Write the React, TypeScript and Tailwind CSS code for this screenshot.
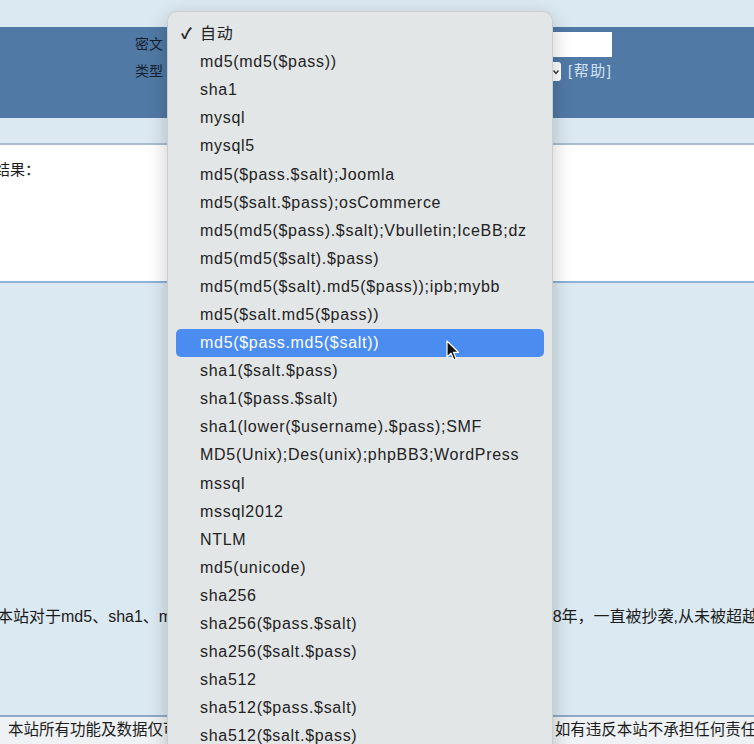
const options = [
  "自动",
  "md5(md5($pass))",
  "sha1",
  "mysql",
  "mysql5",
  "md5($pass.$salt);Joomla",
  "md5($salt.$pass);osCommerce",
  "md5(md5($pass).$salt);Vbulletin;IceBB;dz",
  "md5(md5($salt).$pass)",
  "md5(md5($salt).md5($pass));ipb;mybb",
  "md5($salt.md5($pass))",
  "md5($pass.md5($salt))",
  "sha1($salt.$pass)",
  "sha1($pass.$salt)",
  "sha1(lower($username).$pass);SMF",
  "MD5(Unix);Des(unix);phpBB3;WordPress",
  "mssql",
  "mssql2012",
  "NTLM",
  "md5(unicode)",
  "sha256",
  "sha256($pass.$salt)",
  "sha256($salt.$pass)",
  "sha512",
  "sha512($pass.$salt)",
  "sha512($salt.$pass)",
]

const selected = 0
const hovered = 11

export default function App() {
  return (
    <div className="relative h-[744px] w-[754px] overflow-hidden bg-[#dbe9f2] font-['Liberation_Sans','Noto_Sans_CJK_SC',sans-serif] text-[15px] text-[#1c1c1c]">
      {/* top strip */}
      <div className="h-[27px]" />

      {/* blue form band */}
      <div className="h-[91px] bg-[#5079a5] pt-[5px]">
        <div className="flex h-[25px] items-center">
          <span className="w-[163px] text-right text-[14px] text-[#16212e]">密文</span>
          <div className="ml-[10px] h-[25px] w-[439px] bg-white" />
        </div>
        <div className="mt-[5px] flex h-[19px] items-center">
          <span className="w-[163px] text-right text-[14px] text-[#16212e]">类型</span>
          <div className="ml-[10px] flex h-[19px] w-[388px] items-center justify-end rounded-[3px] bg-white pr-[2px]">
            <svg width="6" height="6" viewBox="0 0 6 6">
              <path d="M0.5 1.5 L3 4.5 L5.5 1.5" fill="none" stroke="#333" strokeWidth="1.4" />
            </svg>
          </div>
          <a className="ml-[7px] text-[15px] tracking-[1.5px] text-[#d3e3f7]">[帮助]</a>
        </div>
      </div>

      <div className="h-[25px]" />

      {/* result panel */}
      <div className="h-[140px] border-t-2 border-b-2 border-t-[#a8bdd0] border-b-[#8fb0da] bg-white pt-[15px]">
        <p className="-ml-[5px] leading-[20px]">结果：</p>
      </div>

      {/* info line */}
      <div className="h-[432px] pt-[324px]">
        <p className="-ml-[3px] whitespace-nowrap text-[16px] leading-[20px]">
          本站对于md5、sha1、mysql、sha256、sha512、ntlm等加密算法破解已研究18年，一直被抄袭,从未被超越
        </p>
      </div>

      {/* footer */}
      <div className="border-t-2 border-[#8ea9c8] bg-[#eef2f4] pt-[3px] text-[15.5px]">
        <p className="ml-[8px] whitespace-nowrap leading-[20px]">
          本站所有功能及数据仅可用于学习研究和合法用途，严禁用于任何违法犯罪行为 如有违反本站不承担任何责任
        </p>
        <p className="ml-[60px] whitespace-nowrap leading-[20px] text-[#2255cc]">
          Copyright © cmd5.com 2006-2024 联系邮箱 123@17304596.com 客服
        </p>
      </div>

      {/* native select menu */}
      <div className="absolute left-[167px] top-[11px] w-[386px] rounded-[10px] border border-black/10 bg-[#e3e6e7] pt-[8px] pb-[8px] shadow-[0_6px_20px_rgba(0,0,0,0.22)]">
        {options.map((o, i) => (
          <div
            key={o}
            className={
              "relative mx-[8px] flex h-[28.1px] items-center rounded-[5px] pl-[24px] text-[16px] tracking-[0.7px] whitespace-nowrap " +
              (i === hovered ? "bg-[#4a8cf0] text-white" : "text-[#222]")
            }
          >
            {i === selected && (
              <span className="absolute left-[5px] text-[15px] font-bold">✓</span>
            )}
            {o}
          </div>
        ))}
      </div>

      {/* mouse pointer */}
      <svg className="absolute left-[446px] top-[340px]" width="14" height="22" viewBox="0 0 14 22">
        <path
          d="M1 1 L1 17 L5 13.2 L7.8 19.8 L10.2 18.8 L7.5 12.3 L12.5 12.3 Z"
          fill="#111"
          stroke="#fff"
          strokeWidth="1.2"
          strokeLinejoin="round"
        />
      </svg>
    </div>
  )
}
